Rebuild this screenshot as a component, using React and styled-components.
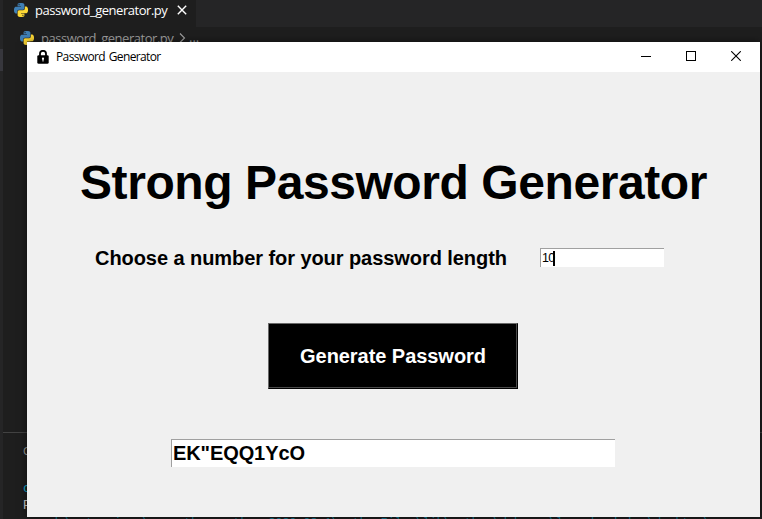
import React from "react";
import styled, { createGlobalStyle } from "styled-components";

const Global = createGlobalStyle`
  *, *::before, *::after { box-sizing: border-box; }
  html, body { margin: 0; padding: 0; overflow: hidden; background: #1e1e1e; }
`;

const Desktop = styled.div`
  position: relative;
  display: flex;
  width: 762px;
  height: 519px;
  overflow: hidden;
  background: #1e1e1e;
  font-family: "Open Sans", "Noto Sans", sans-serif;
`;

const SideStrip = styled.div`
  display: flex;
  flex-direction: column;
  flex: 0 0 3px;
  background: #252526;
`;

const SideSelection = styled.div`
  margin-top: 49px;
  height: 22px;
  background: #37373d;
`;

const Editor = styled.div`
  flex: 1;
  min-width: 0;
  display: flex;
  flex-direction: column;
`;

const TabBar = styled.div`
  display: flex;
  flex: 0 0 27px;
  background: #252526;
`;

const Tab = styled.div`
  display: flex;
  align-items: center;
  width: 193px;
  height: 27px;
  padding: 0 0 7px 11px;
  background: #1e1e1e;
  color: #ffffff;
`;

const FileName = styled.span`
  width: 134px;
  margin-left: 7px;
  font-size: 13px;
  line-height: 18px;
  letter-spacing: -0.47px;
  white-space: pre;
`;

const TabClose = styled.svg`
  margin-left: 8px;
`;

const Breadcrumb = styled.div`
  display: flex;
  align-items: center;
  flex: 0 0 22px;
  padding-left: 17px;
  color: #a0a0a0;
`;

const Chevron = styled.svg`
  margin: 0 3px 0 4px;
`;

const Ellipsis = styled.span`
  margin-bottom: 3px;
  font-size: 13px;
  line-height: 18px;
`;

const CodeArea = styled.div`
  flex: 1;
`;

const Terminal = styled.div`
  flex: 0 0 87px;
  min-height: 0;
  border-top: 1px solid #424242;
  padding: 9px 0 0 20px;
`;

const PanelTab = styled.div`
  height: 38px;
  color: #a0a0a0;
  font-size: 11.5px;
  line-height: 18px;
`;

const TerminalLine = styled.div`
  height: 17px;
  color: ${(p) => p.$color};
  font: ${(p) => p.$size || 11.7}px/17px "Liberation Mono", monospace;
  white-space: pre;
`;

const AppWindow = styled.section`
  position: absolute;
  left: 27px;
  top: 42px;
  width: 733px;
  height: 475px;
  display: flex;
  flex-direction: column;
  background: #f0f0f0;
  box-shadow: 0 0 8px rgba(0, 0, 0, 0.55);
`;

const TitleBar = styled.header`
  display: flex;
  align-items: center;
  flex: 0 0 30px;
  padding: 0 1px 0 10px;
  background: #ffffff;
`;

const WindowTitle = styled.span`
  flex: 1;
  margin-left: 7px;
  color: #000;
  font-size: 12px;
  line-height: 16px;
  letter-spacing: -0.63px;
  word-spacing: 1.2px;
`;

const WindowButton = styled.button`
  display: grid;
  place-items: center;
  width: ${(p) => p.$width || 45}px;
  height: 30px;
  padding: 0 0 2px;
  border: 0;
  background: transparent;
`;

const Form = styled.main`
  flex: 1;
  display: flex;
  flex-direction: column;
  font-family: "Liberation Sans", Arial, sans-serif;
  color: #000;
`;

const Heading = styled.h1`
  margin: 83px 0 0 53px;
  height: 56px;
  font-size: 48px;
  line-height: 56px;
  font-weight: 700;
  letter-spacing: -0.42px;
  white-space: nowrap;
`;

const LengthRow = styled.div`
  display: flex;
  margin: 35px 0 0 68px;
  height: 24px;
`;

const LengthLabel = styled.label`
  width: 445px;
  font-size: 20px;
  line-height: 24px;
  font-weight: 700;
  letter-spacing: -0.065px;
  white-space: nowrap;
`;

const Field = styled.div`
  display: flex;
  align-items: center;
  background: #fff;
  border-top: 1px solid #a0a0a0;
  border-left: 1px solid #a0a0a0;
`;

const LengthField = styled(Field)`
  width: 124px;
  height: 19px;
  margin-top: 2px;
  padding-left: 1px;
  font-size: 12.5px;
  letter-spacing: -0.7px;
`;

const Caret = styled.span`
  width: 2px;
  height: 15px;
  margin-left: -2px;
  background: #000;
`;

const GenerateButton = styled.button`
  width: 250px;
  height: 66px;
  margin: 53px 0 0 241px;
  padding: 0;
  border: 1px solid #000;
  border-top-color: #696969;
  border-left-color: #696969;
  box-shadow: inset -1px -1px #4a4a4a;
  background: #000;
  color: #fff;
  font: 700 20px/24px "Liberation Sans", Arial, sans-serif;
  letter-spacing: -0.05px;
  white-space: nowrap;
`;

const ResultField = styled(Field)`
  width: 444px;
  height: 28px;
  margin: 50px 0 0 144px;
  padding-left: 1px;
  font-size: 20px;
  font-weight: 700;
  letter-spacing: -0.1px;
`;

const SNAKE =
  "M14.25.18l.9.2.73.26.59.3.45.32.34.34.25.34.16.33.1.3.04.26.02.2-.01.13V8.5l-.05.63-.13.55-.21.46-.26.38-.3.31-.33.25-.35.19-.35.14-.33.1-.3.07-.26.04-.21.02H8.77l-.69.05-.59.14-.5.22-.41.27-.33.32-.27.35-.2.36-.15.37-.1.35-.07.32-.04.27-.02.21v3.06H3.17l-.21-.03-.28-.07-.32-.12-.35-.18-.36-.26-.36-.36-.35-.46-.32-.59-.28-.73-.21-.88-.14-1.05-.05-1.23.06-1.22.16-1.04.24-.87.32-.71.36-.57.4-.44.42-.33.42-.24.4-.16.36-.1.32-.05.24-.01h.16l.06.01h8.16v-.83H6.18l-.01-2.75-.02-.37.05-.34.11-.31.17-.28.25-.26.31-.23.38-.2.44-.18.51-.15.58-.12.64-.1.71-.06.77-.04.84-.02 1.27.05zm-6.3 1.98l-.23.33-.08.41.08.41.23.34.33.22.41.09.41-.09.33-.22.23-.34.08-.41-.08-.41-.23-.33-.33-.22-.41-.09-.41.09z";

function PythonIcon() {
  return (
    <svg width="14" height="14" viewBox="0 0 24 24">
      <path d={SNAKE} fill="#3f7fb5" />
      <path d={SNAKE} fill="#fdd835" transform="rotate(180 12 12)" />
    </svg>
  );
}

function LockIcon() {
  return (
    <svg width="12" height="14" viewBox="0 0 12 14">
      <path d="M3 6V3.8a3 3 0 0 1 6 0V6" fill="none" stroke="#000" strokeWidth="1.8" />
      <rect x="0.3" y="5.2" width="11.4" height="8.6" rx="1.4" fill="#000" />
      <circle cx="6" cy="8.7" r="1.1" fill="#fff" />
      <path d="M5.5 9h1v2.6h-1z" fill="#fff" />
    </svg>
  );
}

export default function App() {
  return (
    <>
      <Global />
      <Desktop>
        <SideStrip>
          <SideSelection />
        </SideStrip>
        <Editor>
          <TabBar>
            <Tab>
              <PythonIcon />
              <FileName>password_generator.py</FileName>
              <TabClose width="10" height="10" viewBox="0 0 10 10">
                <path d="M0.8 0.8L9.2 9.2M9.2 0.8L0.8 9.2" stroke="#fff" strokeWidth="1.4" />
              </TabClose>
            </Tab>
          </TabBar>
          <Breadcrumb>
            <PythonIcon />
            <FileName>password_generator.py</FileName>
            <Chevron width="7" height="10" viewBox="0 0 7 10">
              <path d="M1 0.5L5.5 5L1 9.5" fill="none" stroke="#a0a0a0" strokeWidth="1.1" />
            </Chevron>
            <Ellipsis>...</Ellipsis>
          </Breadcrumb>
          <CodeArea />
          <Terminal>
            <PanelTab>OUTPUT</PanelTab>
            <TerminalLine $color="#11a8cd" $size={13}>c</TerminalLine>
            <TerminalLine $color="#cccccc" $size={13}>PS</TerminalLine>
            <TerminalLine $color="#1186a3">
              {"vscode\\extensions\\ms-python.python-2020.08.1\\pythonFiles\\lib\\python\\debugpy\\launcher' 'c:\\desktop\\"}
            </TerminalLine>
          </Terminal>
        </Editor>
        <AppWindow>
          <TitleBar>
            <LockIcon />
            <WindowTitle>Password Generator</WindowTitle>
            <WindowButton aria-label="Minimize">
              <svg width="10" height="10" viewBox="0 0 10 10">
                <path d="M0 5.5H10" stroke="#000" />
              </svg>
            </WindowButton>
            <WindowButton aria-label="Maximize">
              <svg width="10" height="10" viewBox="0 0 10 10">
                <rect x="0.5" y="0.5" width="9" height="9" fill="none" stroke="#000" />
              </svg>
            </WindowButton>
            <WindowButton aria-label="Close" $width={46}>
              <svg width="10" height="10" viewBox="0 0 10 10">
                <path d="M0.2 0.2L9.8 9.8M9.8 0.2L0.2 9.8" stroke="#000" strokeWidth="1.1" />
              </svg>
            </WindowButton>
          </TitleBar>
          <Form>
            <Heading>Strong Password Generator</Heading>
            <LengthRow>
              <LengthLabel>Choose a number for your password length</LengthLabel>
              <LengthField>
                10
                <Caret />
              </LengthField>
            </LengthRow>
            <GenerateButton>Generate Password</GenerateButton>
            <ResultField>EK"EQQ1YcO</ResultField>
          </Form>
        </AppWindow>
      </Desktop>
    </>
  );
}
